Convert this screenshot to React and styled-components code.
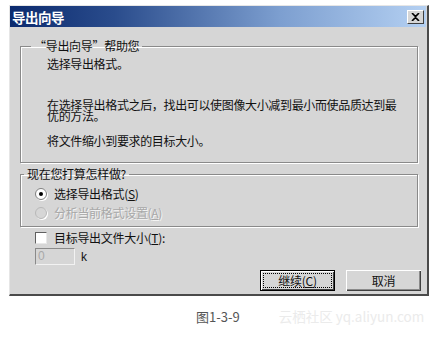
import React from "react";
import styled, { createGlobalStyle } from "styled-components";

const Global = createGlobalStyle`
  html, body { margin: 0; padding: 0; background: #fff; }
  body { font-family: "Noto Sans CJK SC", "Liberation Sans", sans-serif; }
  * { box-sizing: border-box; }
`;

const Page = styled.div`
  width: 434px;
  height: 340px;
  padding: 5px 0 0 9px;
  display: flex;
  flex-direction: column;
`;

const Dialog = styled.div`
  width: 420px;
  height: 291px;
  background: #d6d6d6;
  border-top: 1px solid #e6e6e6;
  border-left: 1px solid #e6e6e6;
  border-right: 2px solid #4a4a4a;
  border-bottom: 2px solid #4a4a4a;
  display: flex;
  flex-direction: column;
`;

const TitleBar = styled.div`
  height: 21px;
  margin: 0 1px 0 0;
  background: linear-gradient(90deg, #0b2a6e 0%, #2a4c8c 25%, #7d9fd0 65%, #b4d0f2 100%);
  display: flex;
  align-items: center;
  justify-content: space-between;
  padding: 0 2px 0 2px;
`;

const Title = styled.span`
  color: #fff;
  font-weight: bold;
  font-size: 13.5px;
  letter-spacing: -0.5px;
`;

const CloseBtn = styled.div`
  width: 17px;
  height: 14px;
  background: #d6d6d6;
  border-top: 1px solid #fff;
  border-left: 1px solid #fff;
  border-right: 1px solid #404040;
  border-bottom: 1px solid #404040;
  display: flex;
  align-items: center;
  justify-content: center;
`;

const Body = styled.div`
  flex: 1;
  display: flex;
  flex-direction: column;
  padding: 0 9px 3px 10px;
`;

const Group = styled.fieldset`
  margin: ${(p) => p.$mt}px 0 0 0;
  padding: ${(p) => p.$pad};
  height: ${(p) => p.$h}px;
  border: 1px solid #8a8a8a;
  box-shadow: 1px 1px 0 #fff, inset 1px 1px 0 #fff;
  min-width: 0;
  display: flex;
  flex-direction: column;
`;

const Legend = styled.legend`
  padding: 0 3px;
  font-size: 12px;
  line-height: 14px;
  color: #111;
  letter-spacing: -0.3px;
`;

const Para = styled.p`
  margin: 0 0 ${(p) => p.$mb}px 16px;
  font-size: 12px;
  line-height: 11.5px;
  color: #111;
  letter-spacing: -0.35px;
`;

const OptionRow = styled.label`
  display: flex;
  align-items: center;
  gap: 7px;
  height: 19px;
  padding-left: ${(p) => p.$indent || 0}px;
  font-size: 12px;
  letter-spacing: -0.3px;
  color: ${(p) => (p.$disabled ? "#a8a8a8" : "#111")};
  text-shadow: ${(p) => (p.$disabled ? "1px 1px 0 #f4f4f4" : "none")};
`;

const Radio = styled.span`
  width: 12px;
  height: 12px;
  border-radius: 50%;
  background: ${(p) => (p.$disabled ? "#d6d6d6" : "#fff")};
  border: 1px solid ${(p) => (p.$disabled ? "#b8b8b8" : "#808080")};
  box-shadow: 1px 1px 0 #fff;
  display: flex;
  align-items: center;
  justify-content: center;
  &::after {
    content: "";
    width: 4px;
    height: 4px;
    border-radius: 50%;
    background: #000;
    display: ${(p) => (p.$checked ? "block" : "none")};
  }
`;

const Check = styled.span`
  width: 12px;
  height: 12px;
  background: #fff;
  border-top: 1px solid #606060;
  border-left: 1px solid #606060;
  border-right: 1px solid #e8e8e8;
  border-bottom: 1px solid #e8e8e8;
`;

const Under = styled.span`
  text-decoration: underline;
`;

const Lower = styled.div`
  display: flex;
  flex-direction: column;
  padding-left: 15px;
  margin-top: 1px;
`;

const SizeRow = styled.div`
  display: flex;
  align-items: center;
  gap: 6px;
  margin-top: 1px;
`;

const SizeBox = styled.div`
  width: 40px;
  height: 17px;
  background: #d6d6d6;
  border-top: 1px solid #8a8a8a;
  border-left: 1px solid #8a8a8a;
  border-right: 1px solid #f2f2f2;
  border-bottom: 1px solid #f2f2f2;
  font-family: "Liberation Sans", sans-serif;
  font-size: 12px;
  color: #a8a8a8;
  padding-left: 2px;
  line-height: 15px;
`;

const Unit = styled.span`
  font-family: "Liberation Sans", sans-serif;
  font-size: 12px;
  color: #111;
`;

const Buttons = styled.div`
  display: flex;
  justify-content: flex-end;
  gap: 11px;
  margin-top: auto;
  margin-right: -3px;
`;

const Button = styled.div`
  width: ${(p) => p.$w}px;
  height: 21px;
  background: #d6d6d6;
  border: ${(p) => (p.$default ? "1px solid #000" : "none")};
  box-shadow: ${(p) =>
    p.$default
      ? "inset 1px 1px 0 #fff, inset -1px -1px 0 #404040"
      : "inset 1px 1px 0 #fff, inset -1px -1px 0 #404040, inset -2px -2px 0 #8a8a8a"};
  display: flex;
  align-items: center;
  justify-content: center;
  font-size: 12px;
  color: #111;
  letter-spacing: -0.3px;
  padding: 2px;
`;

const Focus = styled.span`
  flex: 1;
  align-self: stretch;
  border: 1px dotted #000;
  display: flex;
  align-items: center;
  justify-content: center;
`;

const Footer = styled.div`
  display: flex;
  align-items: center;
  height: 40px;
  padding-left: 187px;
  gap: 39px;
`;

const Caption = styled.span`
  font-size: 13px;
  color: #555;
  font-family: "Noto Sans CJK SC", "Liberation Sans", sans-serif;
`;

const Watermark = styled.span`
  font-size: 13.5px;
  color: #ebebeb;
  font-family: "Noto Sans CJK SC", "Liberation Sans", sans-serif;
`;

export default function App() {
  return (
    <>
      <Global />
      <Page>
        <Dialog>
          <TitleBar>
            <Title>导出向导</Title>
            <CloseBtn>
              <svg width="9" height="8" viewBox="0 0 9 8">
                <path d="M1 0 L4.5 3.5 L8 0 M1 8 L4.5 4.5 L8 8" stroke="#000" strokeWidth="1.6" fill="none" />
              </svg>
            </CloseBtn>
          </TitleBar>
          <Body>
            <Group $mt={12} $h={124} $pad="5px 10px 0 10px">
              <Legend>“导出向导”帮助您</Legend>
              <Para $mb={29}>选择导出格式。</Para>
              <Para $mb={13}>在选择导出格式之后，找出可以使图像大小减到最小而使品质达到最优的方法。</Para>
              <Para $mb={0}>将文件缩小到要求的目标大小。</Para>
            </Group>
            <Group $mt={4} $h={60} $pad="3px 10px 0 3px">
              <Legend>现在您打算怎样做?</Legend>
              <OptionRow $indent={11}>
                <Radio $checked />
                <span>选择导出格式(<Under>S</Under>)</span>
              </OptionRow>
              <OptionRow $indent={11} $disabled>
                <Radio $disabled />
                <span>分析当前格式设置(<Under>A</Under>)</span>
              </OptionRow>
            </Group>
            <Lower>
              <OptionRow>
                <Check />
                <span>目标导出文件大小(<Under>T</Under>):</span>
              </OptionRow>
              <SizeRow>
                <SizeBox>0</SizeBox>
                <Unit>k</Unit>
              </SizeRow>
            </Lower>
            <Buttons>
              <Button $w={75} $default>
                <Focus>继续(<Under>C</Under>)</Focus>
              </Button>
              <Button $w={75}>取消</Button>
            </Buttons>
          </Body>
        </Dialog>
        <Footer>
          <Caption>图1-3-9</Caption>
          <Watermark>云栖社区 yq.aliyun.com</Watermark>
        </Footer>
      </Page>
    </>
  );
}
